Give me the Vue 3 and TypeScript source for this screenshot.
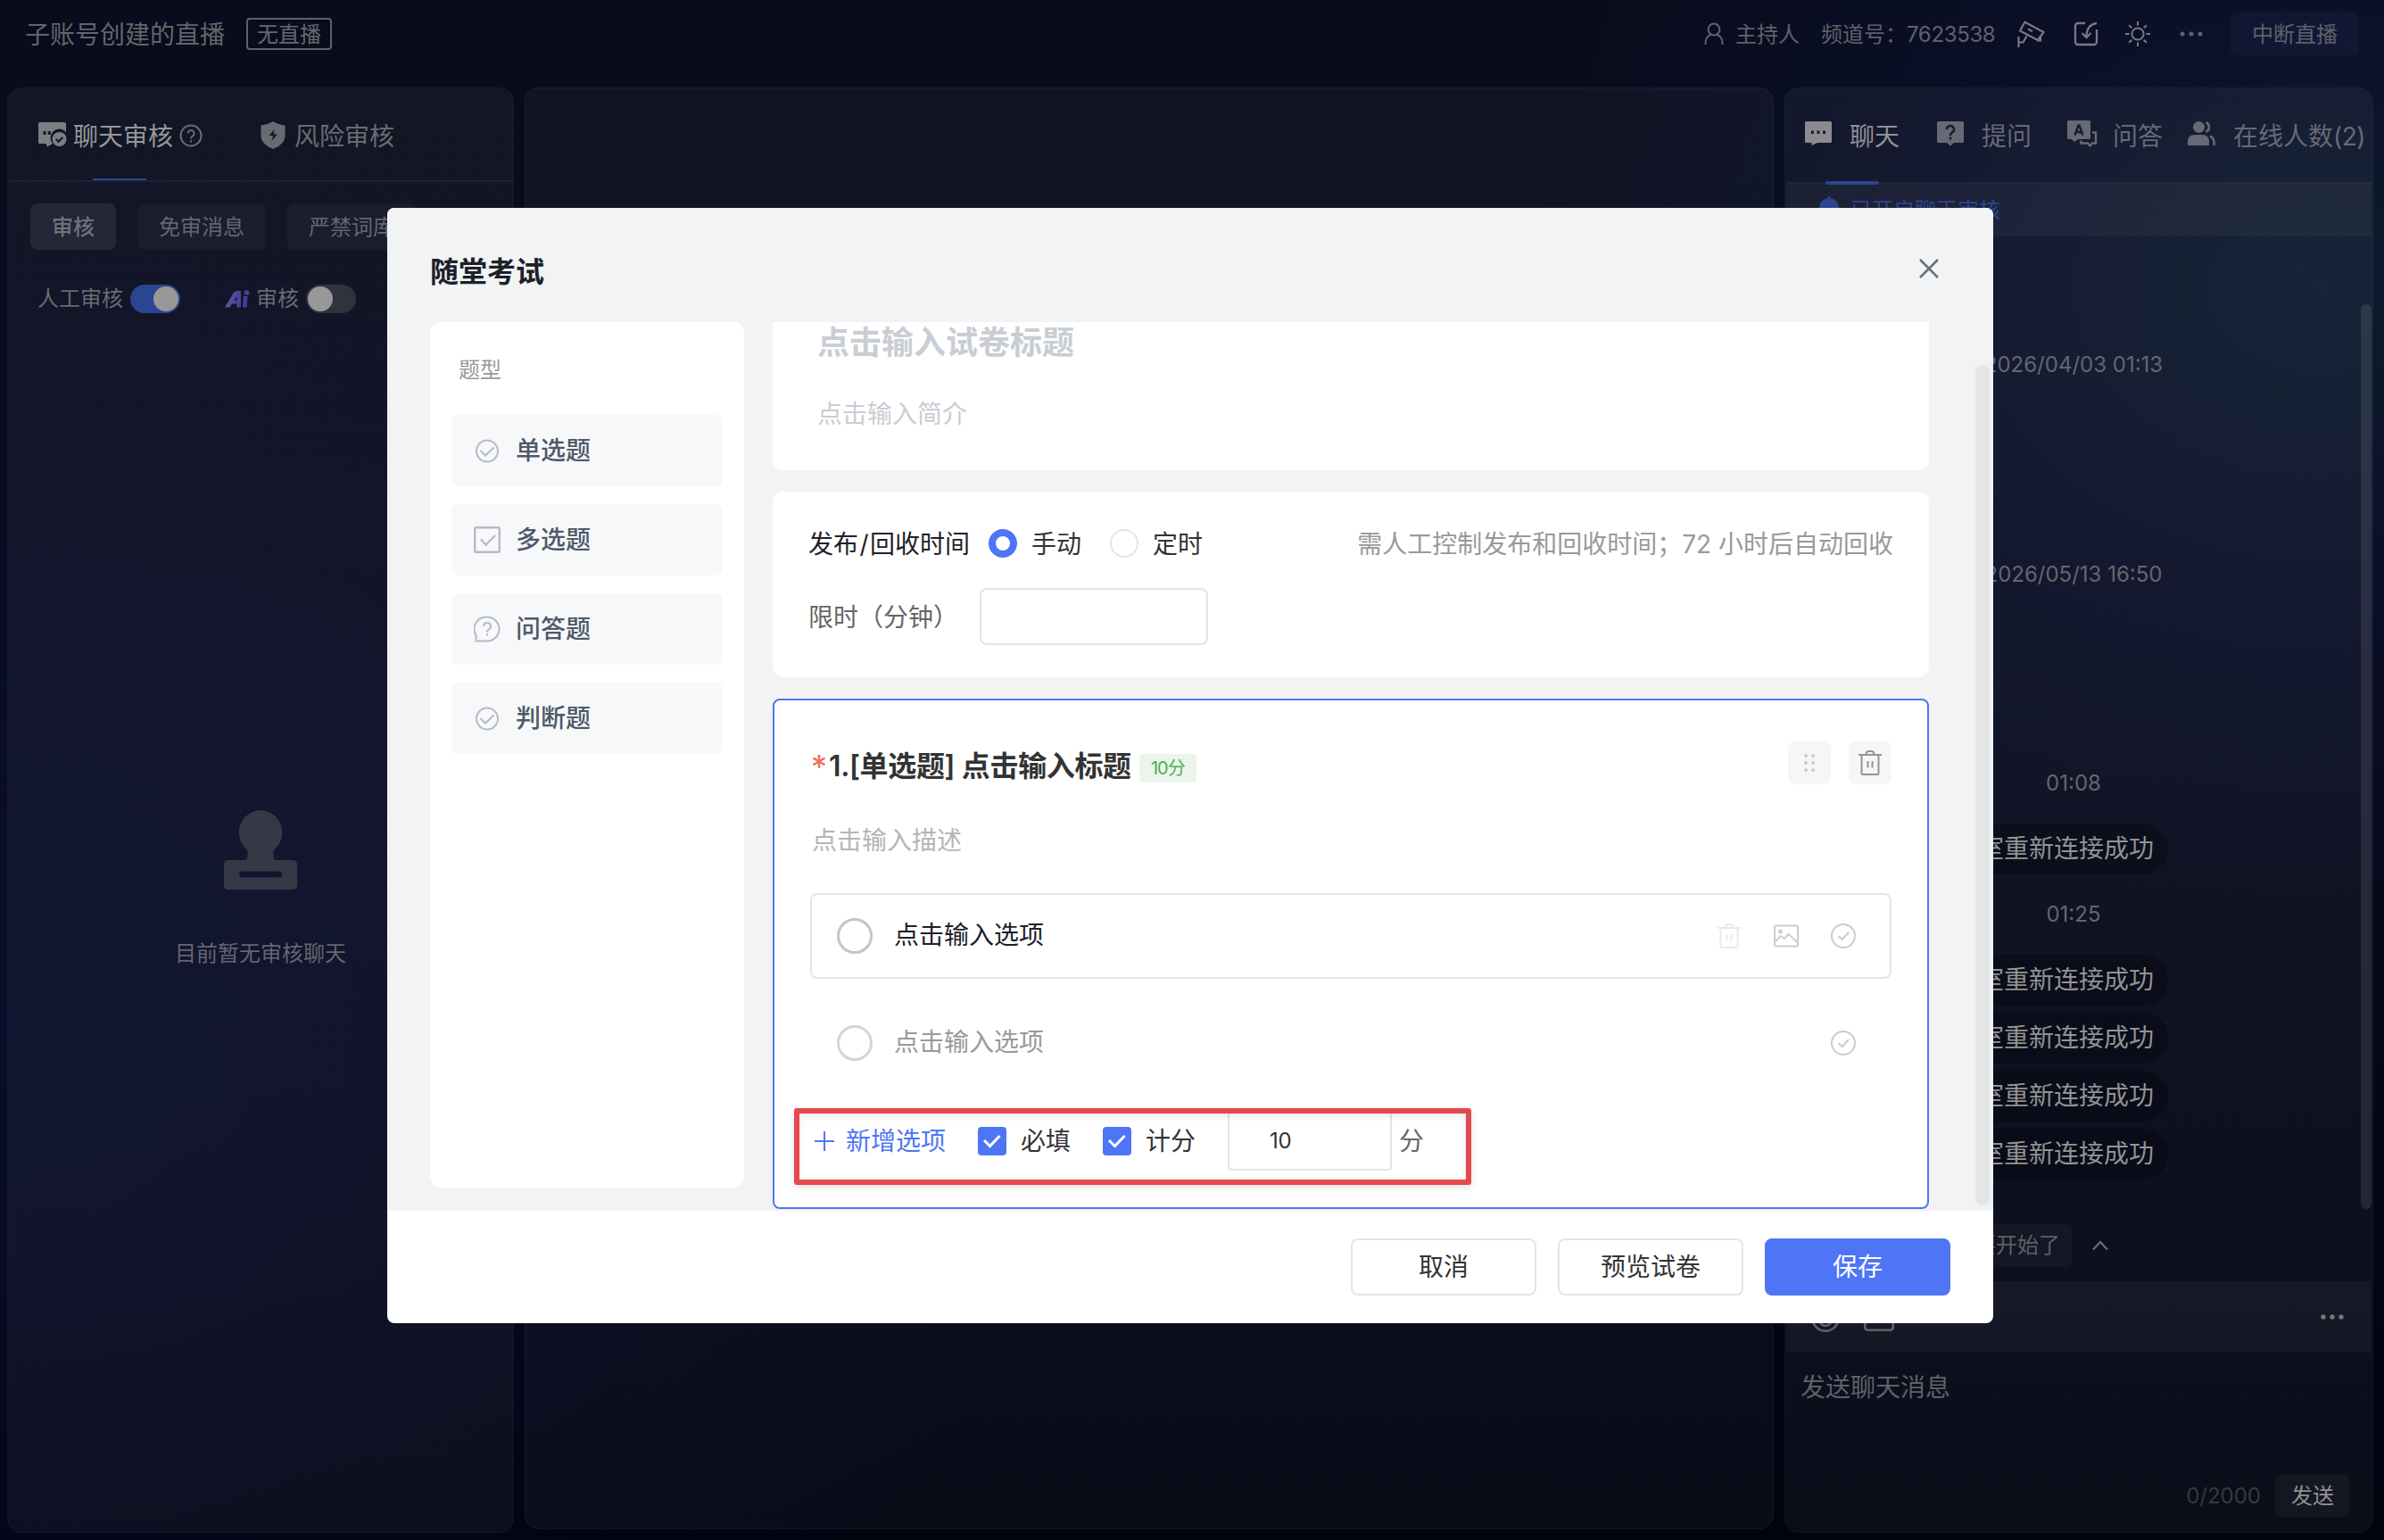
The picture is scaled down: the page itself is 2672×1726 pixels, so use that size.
<script setup lang="ts">
interface QuestionType {
  name: string
  icon: 'radio' | 'checkbox' | 'qa'
}

interface ChatItem {
  kind: 'time' | 'bubble'
  text: string
  gap: number
}

const questionTypes: QuestionType[] = [
  { name: '单选题', icon: 'radio' },
  { name: '多选题', icon: 'checkbox' },
  { name: '问答题', icon: 'qa' },
  { name: '判断题', icon: 'radio' },
]

const reconnect = '聊天室重新连接成功'
const chat: ChatItem[] = [
  { kind: 'time', text: '2026/04/03 01:13', gap: 127 },
  { kind: 'time', text: '2026/05/13 16:50', gap: 201 },
  { kind: 'time', text: '01:08', gap: 200 },
  { kind: 'bubble', text: reconnect, gap: 28 },
  { kind: 'time', text: '01:25', gap: 28 },
  { kind: 'bubble', text: reconnect, gap: 28 },
  { kind: 'bubble', text: reconnect, gap: 8 },
  { kind: 'bubble', text: reconnect, gap: 8 },
  { kind: 'bubble', text: reconnect, gap: 8 },
]
</script>

<template>
  <div class="page">
    <header class="topbar">
      <span class="live-name">子账号创建的直播</span>
      <span class="live-state">无直播</span>
      <div class="top-right">
        <svg class="i-person" width="22" height="26" viewBox="0 0 22 26" fill="none" stroke="currentColor" stroke-width="2">
          <circle cx="11" cy="8" r="6.4" />
          <path d="M1.6 25v-2.6c0-4.6 3-8 6.6-8.6M20.400 25v-2.600c0-4.600-3-8-6.600-8.600" />
        </svg>
        <span class="host">主持人</span>
        <span class="channel">频道号：<span class="num">7623538</span></span>
        <svg class="i-cam" width="32" height="30" viewBox="0 0 32 30" fill="none" stroke="currentColor" stroke-width="2.200">
          <path d="M8.500 1.800 29.500 13l-6.500 9L3 11.500z" stroke-linejoin="round" />
          <path d="M12 9.500l5 2.800" />
          <path d="M26 17.500v5h-4" />
          <path d="M1.500 18v12M1.500 24.500h5l4-7" />
        </svg>
        <svg class="i-import" width="28" height="28" viewBox="0 0 28 28" fill="none" stroke="currentColor" stroke-width="2.300">
          <path d="M13 2H5a3 3 0 0 0-3 3v18a3 3 0 0 0 3 3h18a3 3 0 0 0 3-3V9" />
          <path d="M26 2c-7 1-11.500 6-11.500 15.500M9.500 13l5 5 5-5" />
        </svg>
        <svg class="i-sun" width="28" height="28" viewBox="0 0 28 28" fill="none" stroke="currentColor" stroke-width="2">
          <circle cx="14" cy="14" r="6.600" />
          <path d="M14 0v4.500M14 23.500V28M0 14h4.500M23.500 14H28M4.200 4.200l3 3M20.800 20.800l3 3M4.200 23.800l3-3M20.800 7.200l3-3" />
        </svg>
        <svg class="i-more" width="28" height="6" viewBox="0 0 28 6" fill="currentColor">
          <circle cx="4" cy="3" r="2.500" /><circle cx="14" cy="3" r="2.500" /><circle cx="24" cy="3" r="2.500" />
        </svg>
        <span class="stop">中断直播</span>
      </div>
    </header>

    <main class="panels">
      <section class="panel audit">
        <div class="audit-tabs">
          <svg class="i-chatcheck" width="32" height="30" viewBox="0 0 32 30">
            <path d="M1.500 1h28A1.500 1.500 0 0 1 31 2.500v9.500a9.500 9.500 0 0 0-15 13l-6 3.500-1.500-3.500h-7A1.500 1.500 0 0 1 0 23.500v-21A1.500 1.500 0 0 1 1.500 1z" fill="currentColor" />
            <path d="M5.500 11h3v4h-3zM10.800 11h3v4h-3z" fill="#141725" />
            <circle cx="23.500" cy="20" r="8" fill="currentColor" />
            <path d="M19.800 20l2.800 2.800 4.800-4.800" fill="none" stroke="#141725" stroke-width="2.200" />
          </svg>
          <span class="tab-on">聊天审核</span>
          <svg class="i-help" width="26" height="26" viewBox="0 0 26 26" fill="none" stroke="currentColor" stroke-width="2">
            <circle cx="13" cy="13" r="11.500" />
            <path d="M9.600 10.500a3.500 3.500 0 1 1 5.400 2.900c-1.300.8-2 1.500-2 3M13 18.300v2.200" />
          </svg>
          <svg class="i-shield" width="28" height="31" viewBox="0 0 28 31">
            <path d="M14 0c4 2.500 9 4 13.500 4.500v12c0 6.500-6 11.500-13.500 14.500C6.500 28 .5 23 .5 16.500v-12C5 4 10 2.500 14 0z" fill="currentColor" />
            <path d="M15.500 9l-6 7h4.500l-1.500 6 6.500-7.500h-4.500z" fill="#141725" />
          </svg>
          <span class="tab-off">风险审核</span>
        </div>
        <div class="audit-filters">
          <span class="filter active">审核</span>
          <span class="filter">免审消息</span>
          <span class="filter">严禁词库</span>
        </div>
        <div class="audit-switches">
          <span>人工审核</span>
          <i class="switch on"></i>
          <svg class="i-ai" width="28" height="20" viewBox="0 0 28 20" fill="none">
            <defs>
              <linearGradient id="ai" x1="0" y1="0" x2="1" y2="0">
                <stop offset="0" stop-color="#6a4d96" />
                <stop offset="1" stop-color="#43429a" />
              </linearGradient>
            </defs>
            <path d="M0 19.500 9.500 3.500Q11 1 13.500 1H18v18.500h-4.600v-4H8l-2.500 4zM10.500 12h3V7z" fill="url(#ai)" fill-rule="evenodd" />
            <path d="M21 7h4.500l-1 12.500H20z" fill="#40419a" />
            <circle cx="24.500" cy="3" r="2.800" fill="#47419a" />
          </svg>
          <span>审核</span>
          <i class="switch"></i>
        </div>
        <div class="empty">
          <svg width="84" height="90" viewBox="0 0 84 90">
            <path fill-rule="evenodd" d="M42 0a25 25 0 0 1 16 43.500c-1.500 1.300-1.500 2.500-1.500 4V52q0 4 4 4H78q5 0 5 5v23q0 5-5 5H6q-5 0-5-5V61q0-5 5-5h17.500q4 0 4-4v-4.500c0-1.500 0-2.700-1.500-4A25 25 0 0 1 42 0zM21.500 68.500a3.500 3.500 0 0 0 0 7h41a3.500 3.500 0 0 0 0-7z" fill="#363846" />
          </svg>
          <p>目前暂无审核聊天</p>
        </div>
      </section>

      <section class="panel stage"></section>

      <section class="panel chat">
        <div class="chat-tabs">
          <svg class="c1" width="30" height="28" viewBox="0 0 30 28">
            <path d="M1.500 0h27A1.500 1.500 0 0 1 30 1.500v21a1.500 1.500 0 0 1-1.500 1.500H14l-6.500 3V24h-6A1.500 1.500 0 0 1 0 22.500v-21A1.500 1.500 0 0 1 1.500 0z" fill="#8a8a8f" />
            <path d="M7 10.500h3v3.500H7zM13.500 10.500h3v3.500h-3zM20 10.500h3v3.500h-3z" fill="#181c30" />
          </svg>
          <span class="ct on">聊天</span>
          <svg class="c2" width="30" height="28" viewBox="0 0 30 28">
            <path d="M1.500 0h27A1.500 1.500 0 0 1 30 1.500v21a1.500 1.500 0 0 1-1.500 1.500H19l-4 3.500-4-3.500H1.500A1.500 1.500 0 0 1 0 22.500v-21A1.500 1.500 0 0 1 1.500 0z" fill="currentColor" />
            <path d="M11 9a4 4 0 1 1 6 3.400c-1.500 1-2 1.600-2 3.600M15 17.500V20.500" fill="none" stroke="#181c30" stroke-width="2.500" />
          </svg>
          <span class="ct">提问</span>
          <svg class="c3" width="34" height="30" viewBox="0 0 34 30">
            <path d="M1.500 0h23A1.500 1.500 0 0 1 26 1.500v18a1.500 1.500 0 0 1-1.500 1.500H12l-4 3-3-3H1.500A1.500 1.500 0 0 1 0 19.500v-18A1.500 1.500 0 0 1 1.500 0z" fill="currentColor" />
            <path d="M8.500 16.500l4-11h1l4 11M10 13h6" fill="none" stroke="#181c30" stroke-width="2.400" />
            <path d="M28 13.500h4v12h-4l-2.500 3-2.500-3h-7.500v-3" fill="none" stroke="currentColor" stroke-width="2.400" />
          </svg>
          <span class="ct">问答</span>
          <svg class="c4" width="32" height="28" viewBox="0 0 32 28">
            <circle cx="12.500" cy="6.500" r="6.500" fill="currentColor" />
            <path d="M0 27v-4q0-8 8-8h8q8 0 8 8v4z" fill="currentColor" />
            <path d="M20.500 1.200a5.800 5.800 0 0 1 0 10.600M25 16.500q4.500 2 4.500 7.500v3" fill="none" stroke="currentColor" stroke-width="2.600" />
          </svg>
          <span class="ct">在线人数<span class="cnt">(2)</span></span>
        </div>
        <div class="notice">
          <svg width="24" height="32" viewBox="0 0 24 32"><path d="M10.500 0h3v2.200C19.500 3.200 23 8 23 13.500V24h1v3H0v-3h1V13.500C1 8 4.500 3.200 10.500 2.200z" fill="#2c4590" /></svg>
          <span>已开启聊天审核</span>
        </div>
        <div class="messages">
          <div
            v-for="(item, i) in chat"
            :key="i"
            :class="item.kind"
            :style="{ marginTop: item.gap + 'px' }"
          >{{ item.text }}</div>
          <div class="tip-row">
            <span class="tip">直播马上要开始了</span>
            <svg width="18" height="12" viewBox="0 0 18 12" fill="none" stroke="#6d6f77" stroke-width="2.200"><path d="M1 10.500l8-8.500 8 8.500" /></svg>
          </div>
          <i class="chat-scroll"></i>
        </div>
        <div class="tools">
          <svg width="32" height="32" viewBox="0 0 32 32" fill="none" stroke="currentColor" stroke-width="2.600">
            <circle cx="16" cy="16" r="14.700" /><path d="M9 18a7 7 0 0 0 14 0" />
          </svg>
          <svg class="t-img" width="34" height="30" viewBox="0 0 34 30" fill="none" stroke="currentColor" stroke-width="2.600">
            <rect x="1.300" y="1.300" width="31.400" height="27.400" rx="3" />
          </svg>
          <svg class="t-more" width="28" height="8" viewBox="0 0 28 8" fill="#74757c">
            <circle cx="4" cy="4" r="2.700" /><circle cx="14" cy="4" r="2.700" /><circle cx="24" cy="4" r="2.700" />
          </svg>
        </div>
        <div class="composer">
          <span class="ph">发送聊天消息</span>
          <div class="send-row">
            <span class="count">0/2000</span>
            <span class="send">发送</span>
          </div>
        </div>
      </section>
    </main>

    <div class="dialog">
      <div class="dialog-head">
        <h1>随堂考试</h1>
        <svg width="22" height="22" viewBox="0 0 22 22" fill="none" stroke="#667080" stroke-width="2.600"><path d="M1 1l20 20M21 1 1 21" /></svg>
      </div>
      <div class="dialog-body">
        <aside class="types">
          <div class="types-title">题型</div>
          <div v-for="t in questionTypes" :key="t.name" class="type">
            <svg width="30" height="30" viewBox="0 0 30 30" fill="none" stroke="#b6bac5" stroke-width="2">
              <template v-if="t.icon === 'radio'">
                <circle cx="15" cy="15.500" r="12" />
                <path d="M7.500 15l5.500 5.500 9.500-9" />
              </template>
              <template v-else-if="t.icon === 'checkbox'">
                <rect x="1.200" y="1.200" width="27.600" height="27.600" rx="1.500" stroke-width="2.400" />
                <path d="M8 14.500l5.500 6 10.500-10.500" stroke-width="2.400" />
              </template>
              <template v-else>
                <path d="M15 1.500a13.500 13.500 0 1 1 0 27H2.500v-6.500A13.500 13.500 0 0 1 15 1.500z" stroke-linejoin="round" />
                <path d="M11 12a4 4 0 1 1 6 3.400c-1.500.9-2 1.400-2 3.200M15 20v2.500" />
              </template>
            </svg>
            <span>{{ t.name }}</span>
          </div>
        </aside>

        <div class="form">
          <div class="card intro">
            <div class="paper-title">点击输入试卷标题</div>
            <div class="paper-desc">点击输入简介</div>
          </div>

          <div class="card settings">
            <div class="row">
              <span class="lbl">发布<span class="slash">/</span>回收时间</span>
              <i class="radio checked"></i>
              <span class="opt">手动</span>
              <i class="radio"></i>
              <span class="opt">定时</span>
              <span class="hint">需人工控制发布和回收时间；72 小时后自动回收</span>
            </div>
            <div class="row limit">
              <span class="lbl2">限时（分钟）</span>
              <i class="input"></i>
            </div>
          </div>

          <div class="card question">
            <div class="q-head">
              <span class="star">*</span>
              <span class="q-title">1.[单选题] 点击输入标题</span>
              <span class="tag">10分</span>
              <span class="sq drag">
                <svg width="12" height="20" viewBox="0 0 12 20" fill="#cbcbcb">
                  <circle cx="2" cy="2" r="2" /><circle cx="10" cy="2" r="2" />
                  <circle cx="2" cy="10" r="2" /><circle cx="10" cy="10" r="2" />
                  <circle cx="2" cy="18" r="2" /><circle cx="10" cy="18" r="2" />
                </svg>
              </span>
              <span class="sq">
                <svg width="26" height="28" viewBox="0 0 26 28" fill="none" stroke="#949494" stroke-width="2">
                  <path d="M0 5h26M3.500 5v20.500a1.500 1.500 0 0 0 1.500 1.500h16a1.500 1.500 0 0 0 1.500-1.500V5M8.500 5q0-4 3-4h3q3 0 3 4M10.500 12v7.500M15.500 12v7.500" />
                </svg>
              </span>
            </div>
            <div class="q-desc">点击输入描述</div>

            <div class="option boxed">
              <i class="ring"></i>
              <span>点击输入选项</span>
              <div class="acts">
                <svg width="26" height="28" viewBox="0 0 26 28" fill="none" stroke="#e9eaed" stroke-width="2">
                  <path d="M0 5h26M3.500 5v20.500a1.500 1.500 0 0 0 1.500 1.500h16a1.500 1.500 0 0 0 1.500-1.500V5M8.500 5q0-4 3-4h3q3 0 3 4M10.500 12v7.500M15.500 12v7.500" />
                </svg>
                <svg class="pic" width="28" height="26" viewBox="0 0 28 26" fill="none" stroke="#c9cdd4" stroke-width="2">
                  <rect x="1" y="1.500" width="26" height="23" rx="1" />
                  <circle cx="7.500" cy="8" r="1.600" />
                  <path d="M1 20l7-7 4 3 4.500-5L27 20.500" />
                </svg>
                <svg width="28" height="28" viewBox="0 0 28 28" fill="none" stroke="#c9cdd4" stroke-width="2">
                  <circle cx="14" cy="14" r="13" /><path d="M8.500 14l4.200 4 7.300-8" />
                </svg>
              </div>
            </div>
            <div class="option second">
              <i class="ring"></i>
              <span>点击输入选项</span>
              <div class="acts">
                <svg width="28" height="28" viewBox="0 0 28 28" fill="none" stroke="#c9cdd4" stroke-width="2">
                  <circle cx="14" cy="14" r="13" /><path d="M8.500 14l4.200 4 7.300-8" />
                </svg>
              </div>
            </div>

            <div class="q-foot">
              <svg width="22" height="22" viewBox="0 0 22 22" stroke="#4e75f5" stroke-width="2"><path d="M11 0v22M0 11h22" /></svg>
              <span class="add">新增选项</span>
              <i class="cb"><svg width="20" height="16" viewBox="0 0 20 16" fill="none" stroke="#fff" stroke-width="3"><path d="M1 7l6.500 6.500L18.500 2" /></svg></i>
              <span class="cb-label">必填</span>
              <i class="cb"><svg width="20" height="16" viewBox="0 0 20 16" fill="none" stroke="#fff" stroke-width="3"><path d="M1 7l6.500 6.500L18.500 2" /></svg></i>
              <span class="cb-label">计分</span>
              <span class="score">10</span>
              <span class="unit">分</span>
              <div class="marker"></div>
            </div>
          </div>
        </div>
        <i class="form-scroll"></i>
      </div>
      <div class="dialog-foot">
        <span class="btn">取消</span>
        <span class="btn">预览试卷</span>
        <span class="btn primary">保存</span>
      </div>
    </div>
  </div>
</template>

<style>
body {
  background: #04061a;
}
</style>

<style scoped>
.page {
  position: relative;
  width: 2672px;
  height: 1726px;
  overflow: hidden;
  box-sizing: border-box;
  font-family: Inter, "Noto Sans CJK SC", sans-serif;
  font-size: 24px;
  line-height: 34px;
  white-space: nowrap;
  background:
    radial-gradient(ellipse 900px 700px at 2600px 320px, rgba(14, 29, 48, 0.9), rgba(12, 18, 48, 0.55) 50%, rgba(6, 8, 28, 0) 100%),
    radial-gradient(ellipse 1200px 1000px at 0 1150px, rgba(10, 14, 46, 0.75), rgba(6, 8, 30, 0) 100%),
    linear-gradient(180deg, #090c1c 0%, #070a1c 50%, #01030f 100%);
}
.page *,
.page *::before,
.page *::after {
  box-sizing: border-box;
}
svg {
  display: block;
  flex: none;
}
i {
  display: block;
  flex: none;
}

/* top bar */
.topbar {
  display: flex;
  align-items: center;
  height: 76px;
  margin-bottom: 22px;
  padding: 0 28px;
  color: #5f616b;
}
.live-name {
  padding-top: 2px;
  font-size: 28px;
  color: #63656a;
}
.live-state {
  width: 96px;
  height: 36px;
  margin-left: 24px;
  border: 2px solid #5f616c;
  border-radius: 4px;
  line-height: 33px;
  text-align: center;
  color: #666870;
}
.top-right {
  display: flex;
  align-items: center;
  margin-left: auto;
}
.i-person {
  margin-right: 13px;
}
.host {
  padding-top: 2px;
}
.channel {
  margin-left: 24px;
  padding-top: 2px;
}
.num {
  display: inline-block;
  width: 102px;
  letter-spacing: -0.35px;
}
.i-cam {
  margin-left: 22px;
  color: #777984;
}
.i-import {
  margin-left: 31px;
  color: #777984;
}
.i-sun {
  margin-left: 30px;
  color: #777984;
}
.i-more {
  margin-left: 32px;
  margin-right: 30px;
}
.stop {
  width: 144px;
  height: 48px;
  border-radius: 6px;
  background: rgba(40, 44, 90, 0.22);
  line-height: 49px;
  text-align: center;
}

/* panels */
.panels {
  display: flex;
  gap: 12px;
  padding-left: 8px;
}
.panel {
  border: 2px solid rgba(255, 255, 255, 0.055);
  border-radius: 16px;
  background: rgba(255, 255, 255, 0.042);
  background-clip: padding-box;
}
.audit {
  width: 568px;
  height: 1620px;
}
.stage {
  width: 1400px;
  height: 1616px;
  background: rgba(255, 255, 255, 0.035);
  background-clip: padding-box;
}
.chat {
  display: flex;
  flex-direction: column;
  width: 660px;
  height: 1620px;
}

.audit-tabs {
  position: relative;
  display: flex;
  align-items: center;
  height: 104px;
  padding-left: 33px;
  border-bottom: 2px solid rgba(255, 255, 255, 0.055);
  font-size: 28px;
  color: #6a6b72;
}
.audit-tabs span {
  padding-top: 3px;
}
.audit-tabs::after {
  content: "";
  position: absolute;
  left: 94px;
  bottom: 0;
  width: 60px;
  height: 2px;
  background: #2f4793;
}
.i-chatcheck {
  color: #7d7e83;
}
.tab-on {
  margin-left: 7px;
  color: #96979a;
}
.i-help {
  margin: 1px 0 0 7px;
}
.i-shield {
  margin-left: 65px;
}
.tab-off {
  margin-left: 10px;
}
.audit-filters {
  display: flex;
  gap: 24px;
  padding: 24px 24px 0;
}
.filter {
  height: 52px;
  padding: 0 24px;
  border-radius: 8px;
  background: rgba(255, 255, 255, 0.035);
  line-height: 53px;
  color: #65666e;
}
.filter.active {
  background: rgba(255, 255, 255, 0.075);
  font-weight: 500;
  color: #717279;
}
.audit-switches {
  display: flex;
  align-items: center;
  margin-top: 37px;
  padding-left: 32px;
  color: #6a6b72;
}
.audit-switches span {
  padding-top: 1px;
}
.switch {
  width: 56px;
  height: 32px;
  margin-left: 8px;
  padding: 2px;
  border-radius: 16px;
  background: #30333c;
}
.switch::before {
  content: "";
  display: block;
  width: 28px;
  height: 28px;
  border-radius: 14px;
  background: #989898;
}
.switch.on {
  background: #2c4590;
}
.switch.on::before {
  margin-left: 24px;
}
.i-ai {
  margin: 0 7px 0 50px;
}
.empty {
  display: flex;
  flex-direction: column;
  align-items: center;
  margin-top: 556px;
  color: #65666f;
}
.empty p {
  margin: 54px 0 0;
}

/* chat column */
.chat-tabs {
  position: relative;
  display: flex;
  align-items: center;
  height: 104px;
  padding-left: 21px;
  font-size: 28px;
  color: #676975;
}
.chat-tabs::after {
  content: "";
  position: absolute;
  z-index: 1;
  left: 44px;
  bottom: -3px;
  width: 60px;
  height: 4px;
  border-radius: 2px;
  background: #2c4590;
}
.ct {
  padding-top: 2px;
}
.ct.on {
  color: #8f9195;
}
.c1,
.c2 {
  margin-top: -4px;
  margin-right: 20px;
}
.c2 {
  margin-left: 42px;
}
.c3 {
  margin: -4px 17px 0 40px;
}
.c4 {
  margin: -4px 19px 0 28px;
}
.cnt {
  letter-spacing: -0.6px;
}
.notice {
  display: flex;
  align-items: center;
  height: 61px;
  padding-left: 36px;
  background: rgba(255, 255, 255, 0.04);
  border-top: 2px solid rgba(255, 255, 255, 0.02);
  color: #2c4590;
}
.notice span {
  margin-left: 12px;
}
.messages {
  position: relative;
  display: flex;
  flex-direction: column;
  align-items: center;
  height: 1171px;
  padding-right: 12px;
}
.time {
  color: #64666d;
}
.bubble {
  align-self: flex-start;
  height: 57px;
  margin-left: 144px;
  padding: 0 16px;
  border-radius: 28px;
  background: rgba(4, 6, 12, 0.36);
  font-size: 28px;
  line-height: 57px;
  color: #929394;
}
.tip-row {
  display: flex;
  align-items: center;
  align-self: flex-start;
  margin: 50px 0 0 98px;
}
.tip {
  height: 48px;
  padding: 0 13px 0 17px;
  margin-right: 23px;
  border-radius: 6px;
  background: rgba(255, 255, 255, 0.03);
  line-height: 48px;
  color: #5f6066;
}
.chat-scroll {
  position: absolute;
  right: 0;
  top: 76px;
  width: 12px;
  height: 1014px;
  border-radius: 6px;
  background: rgba(255, 255, 255, 0.095);
}
.tools {
  display: flex;
  align-items: center;
  height: 80px;
  padding: 2px 30px 0 28px;
  background: rgba(255, 255, 255, 0.04);
  color: #606168;
}
.t-img {
  margin-left: 27px;
}
.t-more {
  margin: 0 0 2px auto;
}
.composer {
  display: flex;
  flex: 1;
  flex-direction: column;
  padding: 22px 24px 16px 16px;
}
.ph {
  font-size: 28px;
  color: #5f6069;
}
.send-row {
  display: flex;
  justify-content: flex-end;
  align-items: center;
  margin-top: auto;
}
.count {
  margin-right: 16px;
  padding-top: 2px;
  color: #373941;
}
.send {
  width: 84px;
  height: 48px;
  border-radius: 8px;
  background: rgba(255, 255, 255, 0.04);
  line-height: 49px;
  text-align: center;
  color: #909193;
}

/* exam dialog */
.dialog {
  position: absolute;
  left: 434px;
  top: 233px;
  display: flex;
  flex-direction: column;
  width: 1800px;
  height: 1250px;
  overflow: hidden;
  border-radius: 8px;
  background: #fff;
  color: #333;
  font-size: 28px;
  line-height: 40px;
}
.dialog-head {
  display: flex;
  align-items: center;
  justify-content: space-between;
  height: 128px;
  padding: 8px 61px 0 48px;
  background: #f1f3f5;
}
h1 {
  margin: 8px 0 0;
  font-size: 32px;
  font-weight: 700;
  line-height: 44px;
  color: #1d2129;
}
.dialog-body {
  position: relative;
  display: flex;
  gap: 32px;
  height: 996px;
  padding: 0 72px 0 48px;
  overflow: hidden;
  background: #f3f3f4;
}
.types {
  width: 352px;
  height: 970px;
  padding: 34px 24px 0;
  border-radius: 12px;
  background: #fff;
}
.types-title {
  padding-left: 8px;
  margin-bottom: 30px;
  font-size: 24px;
  color: #999;
}
.type {
  display: flex;
  align-items: center;
  height: 80px;
  margin-bottom: 20px;
  padding: 0 25px;
  border-radius: 8px;
  background: #f7f8fa;
  color: #4e5969;
  font-weight: 500;
}
.type svg {
  margin-bottom: 1px;
}
.type span {
  margin: -1px 0 0 17px;
}
.form {
  width: 1296px;
}
.card {
  border-radius: 12px;
  background: #fff;
}
.intro {
  height: 166px;
  padding: 0 50px;
  border-radius: 0 0 12px 12px;
  color: #c9cdd4;
}
.paper-title {
  font-size: 36px;
  font-weight: 700;
  line-height: 46px;
}
.paper-desc {
  margin-top: 37px;
}
.settings {
  height: 208px;
  margin-top: 24px;
  padding: 42px 40px 0;
}
.row {
  display: flex;
  align-items: center;
  height: 32px;
}
.row span {
  padding-top: 1px;
}
.lbl {
  width: 202px;
  color: #1d2129;
}
.slash {
  margin: 0 1.500px;
}
.radio {
  width: 32px;
  height: 32px;
  border: 2px solid #e4e4e4;
  border-radius: 50%;
}
.radio.checked {
  border: 8px solid #4e75f5;
}
.opt {
  margin: 0 32px 0 16px;
}
.hint {
  margin-left: auto;
  color: #999;
}
.limit {
  height: 64px;
  margin-top: 34px;
}
.lbl2 {
  width: 192px;
  color: #666;
}
.input {
  width: 256px;
  height: 64px;
  border: 2px solid #e5e5e5;
  border-radius: 8px;
}
.question {
  height: 572px;
  margin-top: 24px;
  padding: 46px 40px 0;
  border: 2px solid #4e75f5;
  border-radius: 8px;
}
.q-head {
  display: flex;
  align-items: center;
  height: 48px;
}
.star {
  width: 20px;
  margin: 8px 0 0 1px;
  font-size: 36px;
  color: #f26a5f;
}
.q-title {
  margin-top: 7px;
  font-size: 32px;
  font-weight: 600;
  letter-spacing: -0.35px;
}
.tag {
  width: 64px;
  height: 32px;
  margin: 12px 0 0 9px;
  border-radius: 4px;
  background: #ecf5ed;
  font-size: 20px;
  line-height: 32px;
  text-align: center;
  letter-spacing: -1px;
  color: #4caf50;
}
.sq {
  display: flex;
  align-items: center;
  justify-content: center;
  width: 48px;
  height: 48px;
  margin-left: 20px;
  border-radius: 8px;
  background: #f6f6f7;
}
.sq.drag {
  margin-left: auto;
}
.q-desc {
  margin: 43px 0 39px 2px;
  color: #b5b5b5;
}
.option {
  display: flex;
  align-items: center;
  height: 96px;
  padding: 0 38px 0 28px;
  border: 2px solid transparent;
  border-radius: 8px;
  color: #1d2129;
}
.boxed {
  border-color: #e5e5e5;
}
.second {
  margin-top: 24px;
  color: #999;
}
.option span {
  margin: -2px 0 0 24px;
}
.ring {
  width: 40px;
  height: 40px;
  border: 3px solid #c0c5cd;
  border-radius: 50%;
}
.second .ring {
  border-color: #d2d5dc;
}
.acts {
  display: flex;
  align-items: center;
  gap: 36px;
  margin-left: auto;
}
.pic {
  margin-left: 1px;
}
.q-foot {
  position: relative;
  display: flex;
  align-items: center;
  height: 66px;
  margin-top: 30px;
  padding: 0 0 2px 5px;
}
.add {
  margin: 0 36px 0 13px;
  color: #4e75f5;
}
.cb {
  display: flex;
  align-items: center;
  justify-content: center;
  width: 32px;
  height: 32px;
  border-radius: 4px;
  background: #4e75f5;
}
.cb-label {
  margin: 0 36px 0 16px;
}
.score {
  width: 184px;
  height: 66px;
  padding-left: 45px;
  border: 2px solid #e5e5e5;
  border-radius: 4px;
  font-size: 24px;
  line-height: 62px;
  letter-spacing: -0.4px;
}
.unit {
  margin-left: 8px;
  color: #666;
}
.marker {
  position: absolute;
  left: -18px;
  top: -5px;
  width: 759px;
  height: 86px;
  border: 6px solid #e5484d;
  border-radius: 3px;
  box-shadow: 0 3px 8px rgba(0, 0, 0, 0.12), inset 0 3px 8px rgba(0, 0, 0, 0.09);
}
.form-scroll {
  position: absolute;
  right: 0;
  top: 44px;
  width: 24px;
  height: 950px;
  border: 4px solid #edf1f9;
  border-radius: 12px 0 0 12px;
  background: #edf1f9;
}
.form-scroll::before {
  content: "";
  display: block;
  width: 16px;
  height: 942px;
  border-radius: 8px;
  background: #e5e5e5;
}
.dialog-foot {
  display: flex;
  gap: 24px;
  justify-content: flex-end;
  padding: 31px 48px 0 0;
}
.btn {
  width: 208px;
  height: 64px;
  border: 2px solid #e5e5e5;
  border-radius: 8px;
  line-height: 61px;
  text-align: center;
}
.btn.primary {
  border-color: #4e75f5;
  background: #4e75f5;
  color: #fff;
}
</style>
